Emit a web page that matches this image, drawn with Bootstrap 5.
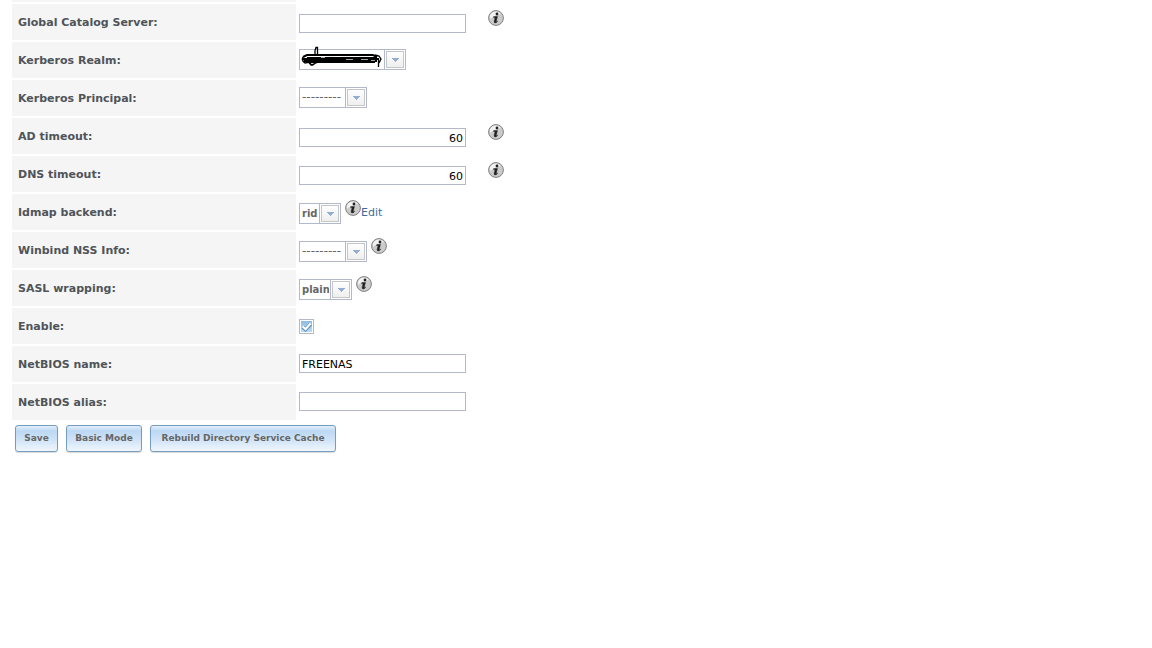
<!DOCTYPE html>
<html lang="en">
<head>
<meta charset="utf-8">
<meta name="viewport" content="width=device-width, initial-scale=1">
<title>Directory Service</title>
<link href="https://cdn.jsdelivr.net/npm/bootstrap@5.3.0/dist/css/bootstrap.min.css" rel="stylesheet">
<style>
body{font-family:"DejaVu Sans",Verdana,sans-serif;font-size:11px;line-height:16px;color:#4f5459;background:#fff}
.form-line{gap:3px;margin-bottom:2px}
.line-name{width:284px;min-height:36px;padding:2px 6px 0;background:#f5f5f5;font-weight:bold}
.line-rest{min-height:2px;height:2px}
.line-value{padding-top:7px}
.line-value.text-only{padding-top:8px}
.line-value.helped{padding-top:6px}
.helped .box-text{margin-top:4px}
.helped .box-select{margin-top:3px}
.box-text{width:167px;height:19px;padding:1px 2px 0;border:1px solid #b3b8ca;border-radius:0;font-size:11px;line-height:16px;color:#000;background:#fff}
.box-text:focus,.box-select:focus{outline:1px solid #769dc0;box-shadow:none}
.box-select{height:21px;padding:0 22px 0 2px;border:1px solid #b3b8ca;border-radius:0;font-size:10px;line-height:19px;font-weight:bold;color:#666;appearance:none;
background:#fff url("data:image/svg+xml,%3Csvg xmlns='http://www.w3.org/2000/svg' width='21' height='19'%3E%3Cdefs%3E%3ClinearGradient id='g' x2='0' y2='1'%3E%3Cstop stop-color='%23fff'/%3E%3Cstop offset='1' stop-color='%23eee'/%3E%3C/linearGradient%3E%3C/defs%3E%3Cpath d='M.5 0v19' stroke='%23b3b8ca'/%3E%3Crect x='2.5' y='1.5' width='17' height='16' fill='url(%23g)' stroke='%23c4c6ca'/%3E%3Cpath d='M8 8h7v1h-1v1h-1v1h-1v1h-1v-1h-1v-1h-1v-1h-1z' fill='%2396add3'/%3E%3C/svg%3E") right center no-repeat}
.pick-realm{width:107px}
.pick-none{width:68px;font-size:12px;font-weight:normal}
.pick-rid{width:42px}
.pick-plain{width:53px}
.box-tick{width:15px;height:15px;margin-top:4px;appearance:none;border:1px solid #b3b8ca;background:#fff}
.box-tick:checked{background:#fff url("data:image/svg+xml,%3Csvg xmlns='http://www.w3.org/2000/svg' width='13' height='13'%3E%3Cdefs%3E%3ClinearGradient id='g' x2='0' y2='1'%3E%3Cstop stop-color='%238fbcdf'/%3E%3Cstop offset='1' stop-color='%23b9dcf3'/%3E%3C/linearGradient%3E%3C/defs%3E%3Crect x='1' y='1' width='11' height='11' fill='url(%23g)'/%3E%3Cpath d='M3 7l2.500 2.500L10.500 4' fill='none' stroke='%234b84b4' stroke-width='3.600'/%3E%3Cpath d='M2.800 6.500l2.700 2.700L10.500 3.500' fill='none' stroke='%23fff' stroke-width='2.200'/%3E%3C/svg%3E") center no-repeat}
.tip{width:16px;height:16px;display:block}
.tip-far{margin-left:22px}
.tip-near{margin-left:4px}
.edit-link{color:#3e6d9c;text-decoration:none;line-height:14px;margin-top:6px}
.scribble{position:absolute;left:0;top:-3px;pointer-events:none}
.form-btn{--bs-btn-font-size:9px;--bs-btn-padding-x:8px;--bs-btn-padding-y:0;--bs-btn-border-radius:3px;--bs-btn-color:#666;--bs-btn-border-color:#769dc0;--bs-btn-hover-color:#444;--bs-btn-hover-border-color:#769dc0;height:27px;padding-bottom:1px;font-weight:bold;line-height:16px;background:linear-gradient(#e3effa 0,#bcd8f4 20%,#cfe3f7 55%,#f0f6fd 100%);box-shadow:0 1px 1px rgba(0,0,0,.15)}
.btn-save{min-width:43px}
.btn-mode{min-width:76px}
.btn-cache{min-width:186px}
.form-buttons{gap:8px;padding:3px}
.form-area{padding-left:12px}
</style>
</head>
<body>
<svg class="d-none" aria-hidden="true">
<symbol id="info" viewBox="0 0 16 16"><circle cx="8" cy="8" r="7.400" fill="#cbcbcb" stroke="#808080"/><path d="M2 9A6.200 6.200 0 0 1 13 4Q6 5 2 9z" fill="#f3f3f3"/><circle cx="9" cy="4" r="1.400" fill="#222"/><path d="M5.800 6.500h3.700L8.300 11.200q0 .8 1.500-.2-.8 1.900-2.500 1.900-1.500 0-1.200-1.500L7 7.500H5.500z" fill="#222" stroke="#222" stroke-width=".4"/></symbol>
</svg>
<main class="form-area">
<form>
<div class="form-line d-flex"><div class="line-name line-rest"></div></div>
<div class="form-line d-flex">
<label class="line-name d-flex align-items-center flex-shrink-0" for="gc">Global Catalog Server:</label>
<div class="line-value helped d-flex align-items-start"><input class="box-text" id="gc" type="text"><svg class="tip tip-far" role="img" aria-label="Help"><use href="#info"/></svg></div>
</div>
<div class="form-line d-flex">
<label class="line-name d-flex align-items-center flex-shrink-0" for="realm">Kerberos Realm:</label>
<div class="line-value d-flex align-items-start"><div class="position-relative d-flex"><select class="box-select pick-realm" id="realm"><option></option></select>
<svg class="scribble" width="85" height="24" aria-hidden="true" fill="none" stroke="#000"><path d="M4 11l4-2h66l4 2M3 13h76M5 15h73M10 16h66M8 12h70" stroke-width="2"/><path d="M4 11q-2 3 2 6l5-1 1 3 5-2 3-1h55M16 9V4.500l1-3h1.500v7M10 17q4 4 6 0M76 9l4 1 2 3-2 4M79.500 12v9" stroke-width="1.300"/><path d="M28 10.500h8m6 0h9m9 0h10M47 13.500h7m8 0h7M22 11.500h4m46 3h4" stroke="#eee" stroke-width=".7"/></svg></div></div>
</div>
<div class="form-line d-flex">
<label class="line-name d-flex align-items-center flex-shrink-0" for="principal">Kerberos Principal:</label>
<div class="line-value d-flex align-items-start"><select class="box-select pick-none" id="principal"><option>---------</option></select></div>
</div>
<div class="form-line d-flex">
<label class="line-name d-flex align-items-center flex-shrink-0" for="adt">AD timeout:</label>
<div class="line-value helped d-flex align-items-start"><input class="box-text text-end" id="adt" type="text" value="60"><svg class="tip tip-far" role="img" aria-label="Help"><use href="#info"/></svg></div>
</div>
<div class="form-line d-flex">
<label class="line-name d-flex align-items-center flex-shrink-0" for="dnst">DNS timeout:</label>
<div class="line-value helped d-flex align-items-start"><input class="box-text text-end" id="dnst" type="text" value="60"><svg class="tip tip-far" role="img" aria-label="Help"><use href="#info"/></svg></div>
</div>
<div class="form-line d-flex">
<label class="line-name d-flex align-items-center flex-shrink-0" for="idmap">Idmap backend:</label>
<div class="line-value helped d-flex align-items-start"><select class="box-select pick-rid" id="idmap"><option>rid</option></select><svg class="tip tip-near" role="img" aria-label="Help"><use href="#info"/></svg><a class="edit-link" href="#">Edit</a></div>
</div>
<div class="form-line d-flex">
<label class="line-name d-flex align-items-center flex-shrink-0" for="nss">Winbind NSS Info:</label>
<div class="line-value helped d-flex align-items-start"><select class="box-select pick-none" id="nss"><option>---------</option></select><svg class="tip tip-near" role="img" aria-label="Help"><use href="#info"/></svg></div>
</div>
<div class="form-line d-flex">
<label class="line-name d-flex align-items-center flex-shrink-0" for="sasl">SASL wrapping:</label>
<div class="line-value helped d-flex align-items-start"><select class="box-select pick-plain" id="sasl"><option>plain</option></select><svg class="tip tip-near" role="img" aria-label="Help"><use href="#info"/></svg></div>
</div>
<div class="form-line d-flex">
<label class="line-name d-flex align-items-center flex-shrink-0" for="enable">Enable:</label>
<div class="line-value d-flex align-items-start"><input class="box-tick" id="enable" type="checkbox" checked></div>
</div>
<div class="form-line d-flex">
<label class="line-name d-flex align-items-center flex-shrink-0" for="nbname">NetBIOS name:</label>
<div class="line-value text-only d-flex align-items-start"><input class="box-text" id="nbname" type="text" value="FREENAS"></div>
</div>
<div class="form-line d-flex">
<label class="line-name d-flex align-items-center flex-shrink-0" for="nbalias">NetBIOS alias:</label>
<div class="line-value text-only d-flex align-items-start"><input class="box-text" id="nbalias" type="text"></div>
</div>
<div class="form-buttons d-flex flex-wrap">
<button class="btn form-btn btn-save" type="submit">Save</button>
<button class="btn form-btn btn-mode" type="button">Basic Mode</button>
<button class="btn form-btn btn-cache" type="button">Rebuild Directory Service Cache</button>
</div>
</form>
</main>
<script src="https://cdn.jsdelivr.net/npm/bootstrap@5.3.0/dist/js/bootstrap.bundle.min.js"></script>
</body>
</html>
